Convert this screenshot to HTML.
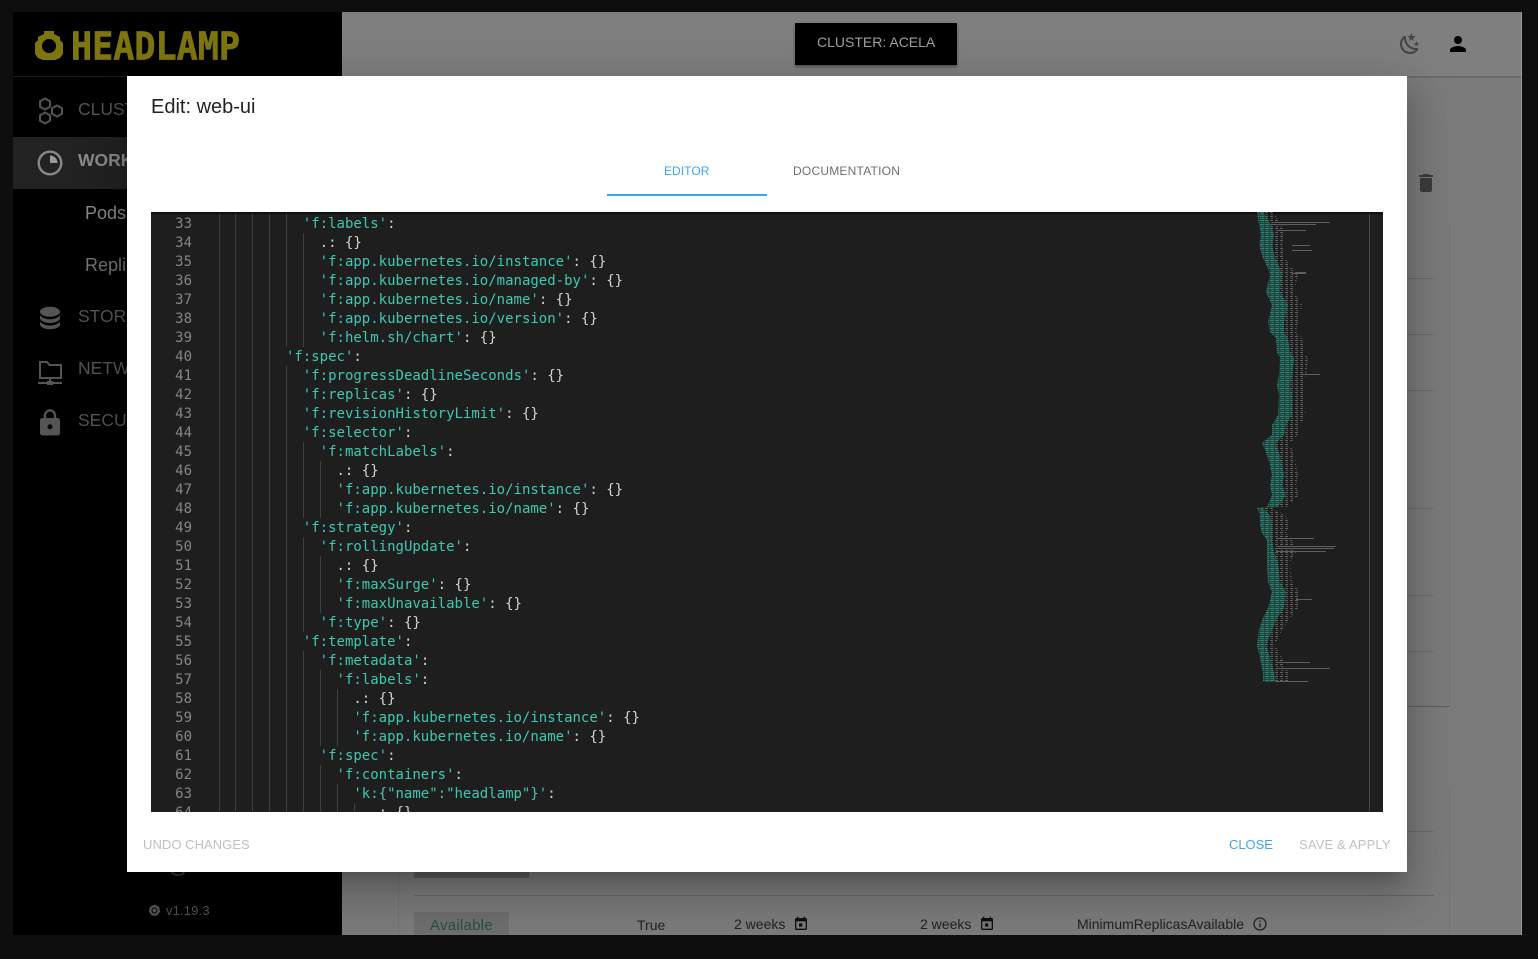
<!DOCTYPE html>
<html lang="en">
<head>
<meta charset="utf-8">
<title>Edit: web-ui</title>
<style>
html,body{margin:0;padding:0;background:#0e0e0e;}
body{width:1538px;height:959px;position:relative;overflow:hidden;font-family:"Liberation Sans",sans-serif;}
.a{position:absolute;}
.t{position:absolute;white-space:pre;line-height:1;}
#screen{position:absolute;left:13px;top:12px;width:1509px;height:923px;overflow:hidden;background:#7b7b7b;}
#side{position:absolute;left:13px;top:12px;width:329px;height:923px;background:#000;}
#modal{position:absolute;left:127px;top:76px;width:1280px;height:796px;background:#fff;box-shadow:0 11px 15px -7px rgba(0,0,0,.2),0 24px 38px 3px rgba(0,0,0,.14),0 9px 46px 8px rgba(0,0,0,.12);}
#editor{position:absolute;left:151px;top:212px;width:1232px;height:600px;background:#1e1e1e;overflow:hidden;}
.ln{position:absolute;left:0;width:41px;text-align:right;color:#858585;font:14px/19px "DejaVu Sans Mono",monospace;margin-top:1px;}
.c{position:absolute;left:67.500px;white-space:pre;color:#d4d4d4;font:14px/19px "DejaVu Sans Mono",monospace;margin-top:1px;}
.c b{font-weight:normal;color:#3dc9b0;}
.nav{font-size:17.500px;letter-spacing:0;color:#555;}
</style>
</head>
<body>
<div id="screen"></div>
<!-- header rule & right edge -->
<div class="a" style="left:342px;top:76px;width:1180px;height:2px;background:#6a6a6a"></div>
<div class="a" style="left:342px;top:12px;width:1180px;height:64px;background:#7f7f7f"></div>
<div class="a" style="left:1521px;top:12px;width:1px;height:923px;background:#9a9a9a"></div>
<!-- cluster button -->
<div class="a" style="left:795px;top:23px;width:162px;height:42px;background:#000;box-shadow:0 2px 3px rgba(0,0,0,.35)"></div>
<div class="t" style="left:817px;top:35px;font-size:14px;letter-spacing:0;color:#a0a0a0">CLUSTER: ACELA</div>
<svg class="a" style="left:1398px;top:32px" width="24" height="24" viewBox="0 0 24 24"><path fill="#444" d="M17.75,4.09L15.22,6.03L16.13,9.09L13.5,7.28L10.87,9.09L11.78,6.03L9.25,4.09L12.44,4L13.5,1L14.56,4L17.75,4.09M21.25,11L19.61,12.25L20.2,14.23L18.5,13.06L16.8,14.23L17.39,12.25L15.75,11L17.81,10.95L18.5,9L19.19,10.95L21.25,11M18.97,15.95C19.8,15.87 20.69,17.05 20.16,17.8C19.84,18.25 19.5,18.67 19.08,19.07C15.17,23 8.84,23 4.94,19.07C1.03,15.17 1.03,8.83 4.94,4.93C5.34,4.53 5.76,4.17 6.21,3.85C6.96,3.32 8.14,4.21 8.06,5.04C7.79,7.9 8.75,10.87 10.95,13.06C13.14,15.26 16.1,16.22 18.97,15.95M17.33,17.97C14.5,17.81 11.7,16.64 9.53,14.5C7.36,12.31 6.2,9.5 6.04,6.68C3.23,9.82 3.34,14.64 6.35,17.66C9.37,20.67 14.19,20.78 17.33,17.97Z"/></svg>
<svg class="a" style="left:1446px;top:32px" width="24" height="24" viewBox="0 0 24 24"><path fill="#000" d="M12 12c2.21 0 4-1.79 4-4s-1.79-4-4-4-4 1.79-4 4 1.79 4 4 4zm0 2c-2.67 0-8 1.34-8 4v2h16v-2c0-2.66-5.33-4-8-4z"/></svg>
<svg class="a" style="left:1414px;top:171px" width="24" height="24" viewBox="0 0 24 24"><path fill="#3c3c3c" d="M6 19c0 1.1.9 2 2 2h8c1.1 0 2-.9 2-2V7H6v12zM19 4h-3.5l-1-1h-5l-1 1H5v2h14V4z"/></svg>

<!-- cards behind the dialog -->
<div class="a" style="left:398px;top:224px;width:1052px;height:483px;border-right:1px solid #727272;border-bottom:1px solid #5e5e5e;box-sizing:border-box"></div>
<div class="a" style="left:398px;top:787px;width:1052px;height:148px;border-right:1px solid #727272;border-left:1px solid #727272;box-sizing:border-box"></div>
<div class="a" style="left:1407px;top:278px;width:27px;height:1px;background:#6c6c6c"></div>
<div class="a" style="left:1407px;top:334px;width:27px;height:1px;background:#6c6c6c"></div>
<div class="a" style="left:1407px;top:390px;width:27px;height:1px;background:#6c6c6c"></div>
<div class="a" style="left:1407px;top:508px;width:27px;height:1px;background:#6c6c6c"></div>
<div class="a" style="left:1407px;top:595px;width:27px;height:1px;background:#6c6c6c"></div>
<div class="a" style="left:1407px;top:651px;width:27px;height:1px;background:#6c6c6c"></div>
<div class="a" style="left:1407px;top:831px;width:27px;height:1px;background:#6c6c6c"></div>
<div class="a" style="left:414px;top:895px;width:1020px;height:1px;background:#666"></div>
<div class="a" style="left:414px;top:872px;width:115px;height:6px;background:#5c5c5c"></div>
<div class="a" style="left:414px;top:912px;width:95px;height:23px;background:#6e6e6e"></div>
<div class="t" style="left:430px;top:918px;font-size:15px;letter-spacing:.25px;color:#25503f">Available</div>
<div class="t" style="left:637px;top:918px;font-size:14px;color:#222">True</div>
<div class="t" style="left:734px;top:917px;font-size:14px;color:#222">2 weeks</div>
<svg class="a" style="left:793px;top:916px" width="16" height="16" viewBox="0 0 24 24"><path fill="#111" d="M19 3h-1V1h-2v2H8V1H6v2H5c-1.11 0-2 .9-2 2v14c0 1.1.89 2 2 2h14c1.1 0 2-.9 2-2V5c0-1.1-.9-2-2-2zm0 16H5V8h14v11zM9 11h5v5H9z"/></svg>
<div class="t" style="left:920px;top:917px;font-size:14px;color:#222">2 weeks</div>
<svg class="a" style="left:979px;top:916px" width="16" height="16" viewBox="0 0 24 24"><path fill="#111" d="M19 3h-1V1h-2v2H8V1H6v2H5c-1.11 0-2 .9-2 2v14c0 1.1.89 2 2 2h14c1.1 0 2-.9 2-2V5c0-1.1-.9-2-2-2zm0 16H5V8h14v11zM9 11h5v5H9z"/></svg>
<div class="t" style="left:1077px;top:917px;font-size:14px;color:#222">MinimumReplicasAvailable</div>
<svg class="a" style="left:1252px;top:916px" width="16" height="16" viewBox="0 0 24 24"><path fill="#222" d="M11 7h2v2h-2zm0 4h2v6h-2zm1-9C6.48 2 2 6.48 2 12s4.48 10 10 10 10-4.48 10-10S17.52 2 12 2zm0 18c-4.41 0-8-3.59-8-8s3.59-8 8-8 8 3.59 8 8-3.59 8-8 8z"/></svg>

<!-- sidebar -->
<div id="side"></div>
<div class="a" style="left:13px;top:76px;width:329px;height:1px;background:#1c1c1c"></div>
<svg class="a" style="left:33px;top:28px" width="32" height="36" viewBox="0 0 32 36">
<path fill="#7d7510" fill-rule="evenodd" d="M11 3h10v3l6 3v3l3 3v11l-3 4-5 2H10l-5-2-3-4V15l3-3V9l6-3zM16 11a7 7 0 1 0 0 14 7 7 0 0 0 0-14z"/>
</svg>
<svg class="a" style="left:68px;top:26px" width="176" height="40">
<text x="3" y="33.500" textLength="169" lengthAdjust="spacingAndGlyphs" font-family="'DejaVu Sans Mono',monospace" font-weight="700" font-size="38" fill="#7d7510" stroke="#7d7510" stroke-width=".7">HEADLAMP</text>
</svg>

<svg class="a" style="left:36px;top:96px" width="30" height="30" viewBox="0 0 30 30" fill="none" stroke="#555" stroke-width="2">
<path d="M9 2.5l5 2.8v5.4l-5 2.8-5-2.8V5.300z"/><path d="M21 9.500l5 2.800v5.400l-5 2.800-5-2.800v-5.400z"/><path d="M9 16.500l5 2.800v5.400l-5 2.800-5-2.800v-5.400z"/>
</svg>
<div class="t nav" style="left:78px;top:101px">CLUSTER</div>

<div class="a" style="left:13px;top:137px;width:329px;height:52px;background:#222"></div>
<svg class="a" style="left:36px;top:149px" width="28" height="28" viewBox="0 0 28 28">
<circle cx="14" cy="14" r="11.300" fill="none" stroke="#888" stroke-width="2.400"/>
<path d="M14 6.500h.5a7.500 7.500 0 0 1 7 7.500H14z" fill="#999"/>
</svg>
<div class="t" style="left:78px;top:152px;font-size:17.500px;font-weight:700;letter-spacing:0;color:#8a8a8a">WORKLOADS</div>
<div class="t" style="left:85px;top:204px;font-size:18px;color:#8a8a8a">Pods</div>
<div class="t" style="left:85px;top:256px;font-size:18px;color:#747474">Replicas</div>

<svg class="a" style="left:35px;top:303px" width="30" height="30" viewBox="0 0 24 24"><path fill="#555" d="M12,3C7.580,3 4,4.790 4,7C4,9.210 7.580,11 12,11C16.420,11 20,9.210 20,7C20,4.790 16.420,3 12,3M4,9V12C4,14.210 7.580,16 12,16C16.420,16 20,14.210 20,12V9C20,11.210 16.420,13 12,13C7.580,13 4,11.210 4,9M4,14V17C4,19.210 7.580,21 12,21C16.420,21 20,19.210 20,17V14C20,16.210 16.420,18 12,18C7.580,18 4,16.210 4,14Z"/></svg>
<div class="t nav" style="left:78px;top:308px">STORAGE</div>

<svg class="a" style="left:36px;top:358px" width="28" height="28" viewBox="0 0 28 28" fill="none" stroke="#555" stroke-width="2">
<path d="M4 20V4h7l2.500 3H25v13z"/><path d="M14 20v4M2 25h24"/><rect x="11" y="23" width="6" height="4" fill="#555" stroke="none"/>
</svg>
<div class="t nav" style="left:78px;top:360px">NETWORK</div>

<svg class="a" style="left:35px;top:408px" width="30" height="30" viewBox="0 0 24 24"><path fill="#555" d="M18 8h-1V6c0-2.760-2.240-5-5-5S7 3.240 7 6v2H6c-1.100 0-2 .9-2 2v10c0 1.100.9 2 2 2h12c1.100 0 2-.9 2-2V10c0-1.100-.9-2-2-2zm-6 9c-1.100 0-2-.9-2-2s.9-2 2-2 2 .9 2 2-.9 2-2 2zm3.100-9H8.900V6c0-1.710 1.390-3.100 3.100-3.100 1.710 0 3.100 1.390 3.100 3.100v2z"/></svg>
<div class="t nav" style="left:78px;top:412px">SECURITY</div>

<svg class="a" style="left:170px;top:872px" width="16" height="4"><path d="M2 0a6 3 0 0 0 12 0" fill="none" stroke="#444" stroke-width="1.500"/></svg>
<svg class="a" style="left:148px;top:904px" width="13" height="13" viewBox="0 0 13 13"><path d="M6.500.5l4.500 2.200 1.200 4.900-3.100 4H3.900l-3.100-4L2 2.700z" fill="#555"/><circle cx="6.500" cy="6.500" r="2.500" fill="none" stroke="#000"/></svg>
<div class="t" style="left:166px;top:904px;font-size:13px;letter-spacing:.15px;color:#555">v1.19.3</div>

<!-- dialog -->
<div id="modal"></div>
<div class="t" style="left:151px;top:97px;font-size:20px;color:#222">Edit: web-ui</div>
<div class="t" style="left:664px;top:165px;font-size:12px;letter-spacing:.05px;color:#3aa6f0">EDITOR</div>
<div class="t" style="left:793px;top:165px;font-size:12px;letter-spacing:.22px;color:#6f6f6f">DOCUMENTATION</div>
<div class="a" style="left:607px;top:194px;width:160px;height:2px;background:#3aa6f0"></div>

<div id="editor">
<svg class="a" style="left:0;top:0" width="1232" height="600" shape-rendering="crispEdges">
<g transform="translate(-151 -212)" fill="#404040">
<rect x="219" y="212" width="1" height="600"/>
<rect x="235" y="212" width="1" height="600"/>
<rect x="252" y="212" width="1" height="600"/>
<rect x="269" y="212" width="1" height="600"/>
<rect x="286" y="212" width="1" height="135"/><rect x="286" y="366" width="1" height="446"/>
<rect x="303" y="233" width="1" height="114"/><rect x="303" y="442" width="1" height="76"/><rect x="303" y="537" width="1" height="95"/><rect x="303" y="651" width="1" height="161"/>
<rect x="320" y="461" width="1" height="57"/><rect x="320" y="556" width="1" height="57"/><rect x="320" y="670" width="1" height="76"/><rect x="320" y="765" width="1" height="47"/>
<rect x="337" y="689" width="1" height="57"/><rect x="337" y="784" width="1" height="28"/>
<rect x="354" y="803" width="1" height="9"/>
<rect x="1369" y="212" width="1" height="600" fill="#474747"/>
</g>
</svg>
<div class="a" style="left:0;top:0;width:1232px;height:3px;background:linear-gradient(#0a0a0a,rgba(30,30,30,0))"></div>

<div class="ln" style="top:2px">33</div><div class="c" style="top:2px">          <b>'f:labels'</b>:</div>
<div class="ln" style="top:21px">34</div><div class="c" style="top:21px">            .: {}</div>
<div class="ln" style="top:40px">35</div><div class="c" style="top:40px">            <b>'f:app.kubernetes.io/instance'</b>: {}</div>
<div class="ln" style="top:59px">36</div><div class="c" style="top:59px">            <b>'f:app.kubernetes.io/managed-by'</b>: {}</div>
<div class="ln" style="top:78px">37</div><div class="c" style="top:78px">            <b>'f:app.kubernetes.io/name'</b>: {}</div>
<div class="ln" style="top:97px">38</div><div class="c" style="top:97px">            <b>'f:app.kubernetes.io/version'</b>: {}</div>
<div class="ln" style="top:116px">39</div><div class="c" style="top:116px">            <b>'f:helm.sh/chart'</b>: {}</div>
<div class="ln" style="top:135px">40</div><div class="c" style="top:135px">        <b>'f:spec'</b>:</div>
<div class="ln" style="top:154px">41</div><div class="c" style="top:154px">          <b>'f:progressDeadlineSeconds'</b>: {}</div>
<div class="ln" style="top:173px">42</div><div class="c" style="top:173px">          <b>'f:replicas'</b>: {}</div>
<div class="ln" style="top:192px">43</div><div class="c" style="top:192px">          <b>'f:revisionHistoryLimit'</b>: {}</div>
<div class="ln" style="top:211px">44</div><div class="c" style="top:211px">          <b>'f:selector'</b>:</div>
<div class="ln" style="top:230px">45</div><div class="c" style="top:230px">            <b>'f:matchLabels'</b>:</div>
<div class="ln" style="top:249px">46</div><div class="c" style="top:249px">              .: {}</div>
<div class="ln" style="top:268px">47</div><div class="c" style="top:268px">              <b>'f:app.kubernetes.io/instance'</b>: {}</div>
<div class="ln" style="top:287px">48</div><div class="c" style="top:287px">              <b>'f:app.kubernetes.io/name'</b>: {}</div>
<div class="ln" style="top:306px">49</div><div class="c" style="top:306px">          <b>'f:strategy'</b>:</div>
<div class="ln" style="top:325px">50</div><div class="c" style="top:325px">            <b>'f:rollingUpdate'</b>:</div>
<div class="ln" style="top:344px">51</div><div class="c" style="top:344px">              .: {}</div>
<div class="ln" style="top:363px">52</div><div class="c" style="top:363px">              <b>'f:maxSurge'</b>: {}</div>
<div class="ln" style="top:382px">53</div><div class="c" style="top:382px">              <b>'f:maxUnavailable'</b>: {}</div>
<div class="ln" style="top:401px">54</div><div class="c" style="top:401px">            <b>'f:type'</b>: {}</div>
<div class="ln" style="top:420px">55</div><div class="c" style="top:420px">          <b>'f:template'</b>:</div>
<div class="ln" style="top:439px">56</div><div class="c" style="top:439px">            <b>'f:metadata'</b>:</div>
<div class="ln" style="top:458px">57</div><div class="c" style="top:458px">              <b>'f:labels'</b>:</div>
<div class="ln" style="top:477px">58</div><div class="c" style="top:477px">                .: {}</div>
<div class="ln" style="top:496px">59</div><div class="c" style="top:496px">                <b>'f:app.kubernetes.io/instance'</b>: {}</div>
<div class="ln" style="top:515px">60</div><div class="c" style="top:515px">                <b>'f:app.kubernetes.io/name'</b>: {}</div>
<div class="ln" style="top:534px">61</div><div class="c" style="top:534px">            <b>'f:spec'</b>:</div>
<div class="ln" style="top:553px">62</div><div class="c" style="top:553px">              <b>'f:containers'</b>:</div>
<div class="ln" style="top:572px">63</div><div class="c" style="top:572px">                <b>'k:{"name":"headlamp"}'</b>:</div>
<div class="ln" style="top:591px">64</div><div class="c" style="top:591px">                  .: {}</div>

<!-- minimap -->
<svg class="a" style="left:0;top:0" width="1232" height="600">
<defs>
<pattern id="mt" width="5" height="4" patternUnits="userSpaceOnUse"><rect width="4" height="1" fill="#2a8272"/><rect x="1" y="2" width="3" height="1" fill="#267567"/><rect y="1" width="2" height="1" fill="#1f4a43"/></pattern>
<pattern id="mg" width="5" height="4" patternUnits="userSpaceOnUse"><rect width="3" height="1" fill="#5e5e5e"/><rect x="1" y="2" width="2" height="1" fill="#515151"/></pattern>
</defs>
<g transform="translate(-151 -212)">
<polygon fill="url(#mg)" points="1257,212 1259,225 1261,235 1259,245 1263,258 1268,268 1270,275 1266,292 1272,305 1268,322 1270,332 1276,338 1277,352 1280,358 1279,375 1277,385 1279,395 1278,415 1272,425 1272,435 1262,443 1263,445 1267,455 1270,465 1272,475 1270,485 1272,495 1267,507 1257,508 1260,515 1260,525 1262,533 1267,540 1267,552 1267,562 1268,582 1272,592 1268,608 1263,618 1259,630 1257,645 1260,658 1263,672 1263,682 1290,682 1288,672 1282,658 1275,645 1282,630 1290,618 1298,608 1300,592 1292,582 1290,562 1296,552 1292,540 1286,533 1290,525 1285,515 1272,508 1287,507 1299,495 1296,485 1298,475 1296,465 1295,455 1290,445 1290,443 1298,435 1300,425 1306,415 1304,395 1304,385 1306,375 1308,358 1304,352 1302,338 1296,332 1298,322 1302,305 1294,292 1298,275 1292,268 1285,258 1282,245 1284,235 1282,225 1273,212"/>
<polygon fill="#24665a" fill-opacity=".55" points="1257,212 1259,225 1261,235 1259,245 1263,258 1268,268 1270,275 1266,292 1272,305 1268,322 1270,332 1276,338 1277,352 1280,358 1279,375 1277,385 1279,395 1278,415 1272,425 1272,435 1262,443 1263,445 1267,455 1270,465 1272,475 1270,485 1272,495 1267,507 1257,508 1260,515 1260,525 1262,533 1267,540 1267,552 1267,562 1268,582 1272,592 1268,608 1263,618 1259,630 1257,645 1260,658 1263,672 1263,682 1276,682 1274,672 1270,658 1266,645 1272,630 1277,618 1284,608 1286,592 1280,582 1278,562 1274,552 1272,540 1272,533 1272,525 1270,515 1263,508 1278,507 1286,495 1282,485 1284,475 1282,465 1280,455 1276,445 1276,443 1284,435 1286,425 1292,415 1292,395 1290,385 1292,375 1294,358 1290,352 1288,338 1284,332 1284,322 1288,305 1280,292 1282,275 1280,268 1275,258 1272,245 1274,235 1271,225 1264,212"/>
<polygon fill="url(#mt)" points="1257,212 1259,225 1261,235 1259,245 1263,258 1268,268 1270,275 1266,292 1272,305 1268,322 1270,332 1276,338 1277,352 1280,358 1279,375 1277,385 1279,395 1278,415 1272,425 1272,435 1262,443 1263,445 1267,455 1270,465 1272,475 1270,485 1272,495 1267,507 1257,508 1260,515 1260,525 1262,533 1267,540 1267,552 1267,562 1268,582 1272,592 1268,608 1263,618 1259,630 1257,645 1260,658 1263,672 1263,682 1276,682 1274,672 1270,658 1266,645 1272,630 1277,618 1284,608 1286,592 1280,582 1278,562 1274,552 1272,540 1272,533 1272,525 1270,515 1263,508 1278,507 1286,495 1282,485 1284,475 1282,465 1280,455 1276,445 1276,443 1284,435 1286,425 1292,415 1292,395 1290,385 1292,375 1294,358 1290,352 1288,338 1284,332 1284,322 1288,305 1280,292 1282,275 1280,268 1275,258 1272,245 1274,235 1271,225 1264,212"/>
<g fill="#5e5e5e">
<rect x="1272" y="222" width="58" height="1"/><rect x="1272" y="224" width="44" height="1"/>
<rect x="1278" y="230" width="28" height="1"/><rect x="1292" y="245" width="18" height="1"/><rect x="1292" y="250" width="20" height="1"/>
<rect x="1296" y="272" width="10" height="1"/><rect x="1292" y="273" width="14" height="1"/>
<rect x="1300" y="374" width="20" height="1"/><rect x="1276" y="546" width="60" height="1"/>
<rect x="1276" y="548" width="58" height="1"/><rect x="1276" y="551" width="50" height="1"/>
<rect x="1276" y="538" width="38" height="1"/><rect x="1296" y="599" width="16" height="1"/>
<rect x="1276" y="668" width="54" height="1"/><rect x="1276" y="662" width="34" height="1"/><rect x="1276" y="681" width="32" height="1"/>
</g>
</g>
</svg>
</div>

<div class="t" style="left:143px;top:838px;font-size:13px;letter-spacing:.05px;color:#c0c0c0">UNDO CHANGES</div>
<div class="t" style="left:1229px;top:838px;font-size:13px;letter-spacing:-.05px;color:#3aa6f0">CLOSE</div>
<div class="t" style="left:1299px;top:838px;font-size:13px;letter-spacing:.15px;color:#c0c0c0">SAVE &amp; APPLY</div>
</body>
</html>
